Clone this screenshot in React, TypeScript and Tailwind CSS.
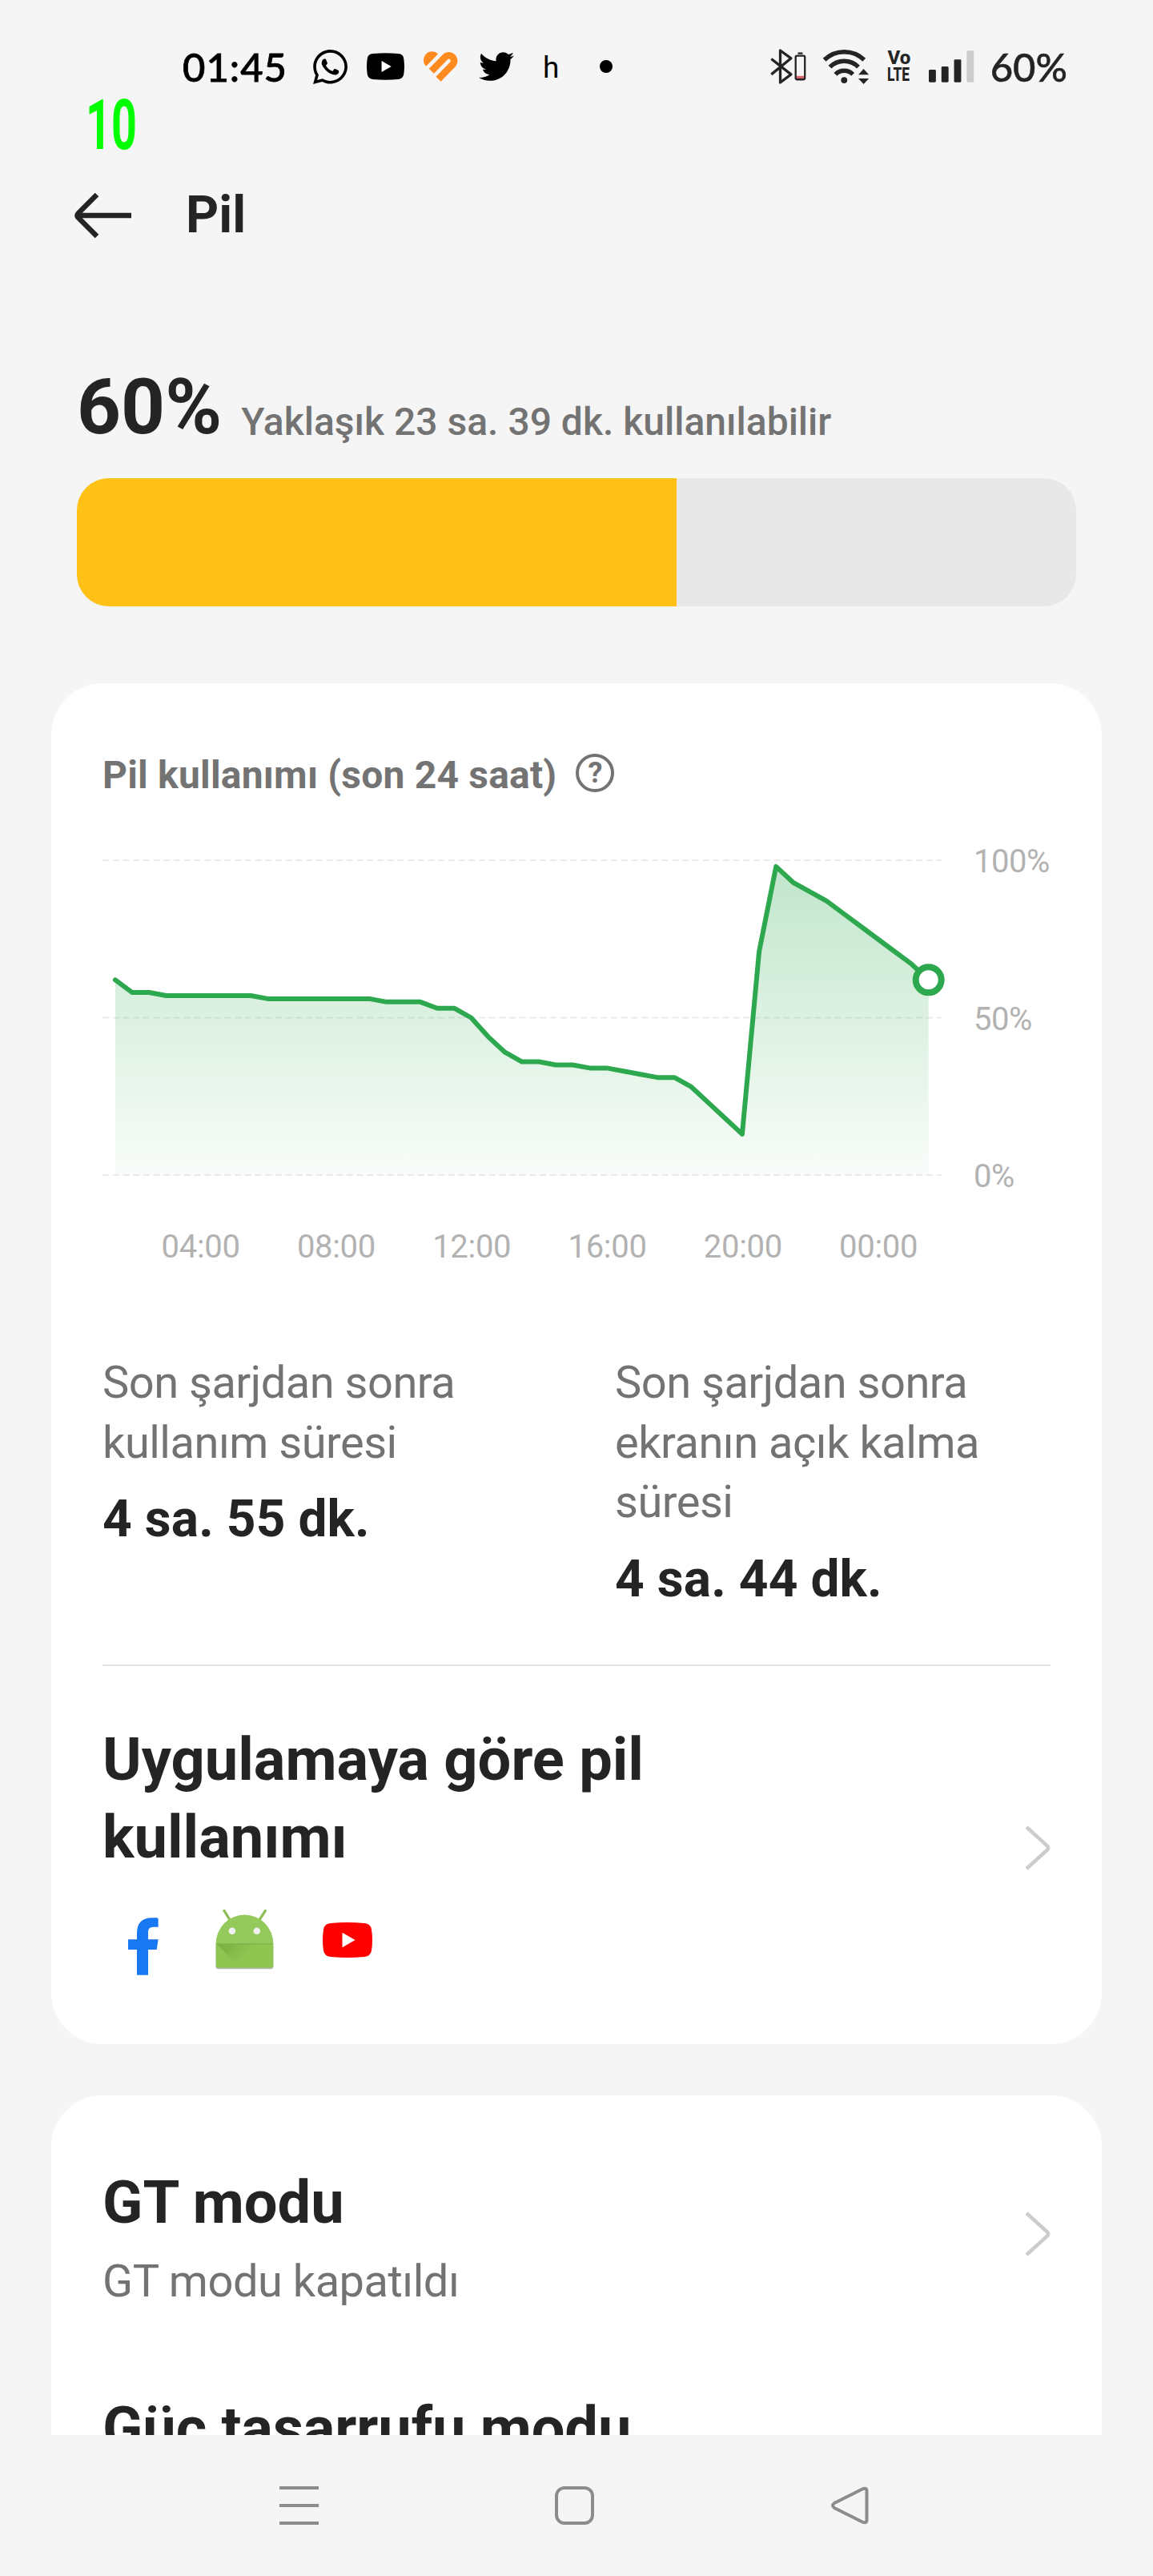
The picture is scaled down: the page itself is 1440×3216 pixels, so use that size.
import { FaWhatsapp, FaTwitter } from "react-icons/fa";

// one sample every 30 minutes, starting at 01:30
const LEVELS = [
  62, 58, 58, 57, 57, 57, 57, 57, 57, 56, 56, 56, 56, 56, 56, 56, 55, 55, 55, 53, 53, 50, 44, 39, 36, 36, 35, 35, 34,
  34, 33, 32, 31, 31, 28, 23, 18, 13, 71, 98, 93, 90, 87, 83, 79, 75, 71, 67, 62,
];

const HOURS = ["04:00", "08:00", "12:00", "16:00", "20:00", "00:00"];

const px = (i: number) => 16 + i * 21.16;
const py = (level: number) => 24 + (100 - level) * 3.93;

const YouTubeIcon = ({ className }: { className: string }) => (
  <svg className={className} viewBox="0 0 62 44" fill="currentColor">
    <path d="M10 1Q31-1 52 1Q60 1.500 61 9Q63 22 61 35Q60 42 52 43Q31 45 10 43Q2 42 1 35Q-1 22 1 9Q2 1.500 10 1Z" />
    <path d="M24.500 12.700V31.300L40.500 22Z" fill="#fff" />
  </svg>
);

const HeartIcon = () => (
  <svg className="ml-[23px] w-[45px] h-[38px]" viewBox="84 44 134 114" fill="none">
    <path d="M141 54A32 32 0 1 0 96 100Z" fill="#ff8a1f" />
    <path d="M116 118 169 64A20 20 0 0 1 197 92L142 148" stroke="#ff8a1f" strokeWidth="26" />
  </svg>
);

const BluetoothIcon = () => (
  <svg className="w-[46px] h-[46px]" viewBox="186 90 138 138" fill="none" stroke="#242424">
    <path d="M190 189 265 128 224 98V220L265 189 190 130" strokeWidth="10" strokeLinejoin="round" />
    <path d="M286 195H314V206H286Z" fill="#d9626c" stroke="none" />
    <rect x="282.500" y="118.500" width="35" height="90" rx="5" strokeWidth="7" />
    <path d="M291 109H309" strokeWidth="7" />
  </svg>
);

const WifiIcon = () => (
  <svg className="ml-[20px] w-[60px] h-[46px]" viewBox="382 88 180 138" fill="none" stroke="#242424" strokeWidth="17">
    <path d="M390 132A108 108 0 0 1 541 132" />
    <path d="M411 159A76 76 0 0 1 519 159" />
    <path d="M432 187A46 46 0 0 1 498 187" />
    <circle cx="465" cy="209" r="12" fill="#242424" stroke="none" />
    <path d="M519 188H559L539 166ZM519 203H559L539 224Z" fill="#242424" stroke="none" />
  </svg>
);

const SignalIcon = () => (
  <svg className="ml-[22px] w-[57px] h-[40px]" viewBox="0 0 57 40" fill="#242424">
    <rect x="0" y="24" width="9" height="16" rx="1.500" />
    <rect x="16" y="20" width="9" height="20" rx="1.500" />
    <rect x="32" y="11" width="9" height="29" rx="1.500" />
    <rect x="48" y="0" width="9" height="40" rx="1.500" fill="#ccc" />
  </svg>
);

const StatusBar = () => (
  <div className="h-[125px] pt-[42px] pl-[228px] pr-[107px] flex justify-between items-start text-black">
    <div className="h-[82px] flex items-center">
      <span className="w-[160px] font-[Lato,sans-serif] font-medium text-[49px] leading-none tracking-[1px] [-webkit-text-stroke:0.8px]">01:45</span>
      <FaWhatsapp className="w-[49px] h-[49px]" />
      <YouTubeIcon className="ml-[21px] w-[47px] h-[34px]" />
      <HeartIcon />
      <FaTwitter className="ml-[25px] w-[44px] h-[44px]" />
      <span className="mt-[2px] ml-[36px] text-[37px] leading-none">h</span>
      <span className="ml-[51px] w-4 h-4 rounded-full bg-black" />
    </div>
    <div className="w-[371px] h-[82px] flex items-center text-[#242424]">
      <BluetoothIcon />
      <WifiIcon />
      <div className="ml-[22px] w-[30px] shrink-0 flex flex-col font-extrabold text-[24px] leading-[21px]">
        <span>Vo</span>
        <span className="w-[44px] origin-left scale-x-[.72]">LTE</span>
      </div>
      <SignalIcon />
      <span className="ml-[20px] font-[Lato,sans-serif] font-medium text-[49px] leading-none [-webkit-text-stroke:0.5px]">60%</span>
    </div>
  </div>
);

const FacebookIcon = () => (
  <svg className="mt-[12px] w-[38px] h-[72px]" viewBox="90 74 114 216" fill="#1877f2">
    <path d="M123 289V194H90V156H123V133Q123 75 180 75H197Q203 75 203 81V109H184Q165 109 165 127V156H203L197 194H165V289Z" />
  </svg>
);

const AndroidIcon = () => (
  <svg className="ml-[70px] w-[75px] h-[78px]" viewBox="415 38 226 234" fill="none">
    <defs>
      <linearGradient id="fold" x1="424" y1="176" x2="500" y2="250" gradientUnits="userSpaceOnUse">
        <stop offset="0" stopColor="#4d7c1f" stopOpacity="0.35" />
        <stop offset="1" stopColor="#4d7c1f" stopOpacity="0" />
      </linearGradient>
    </defs>
    <path d="M420 180V258Q420 267 430 267H626Q636 267 636 258V180Z" fill="#b5b5b5" />
    <path d="M451 48 471 80M606 48 585 80" stroke="#8fbf5a" strokeWidth="10" strokeLinecap="round" />
    <path d="M420 172A108 109 0 0 1 636 172Z" fill="#94c95c" />
    <path d="M420 172H636V254Q636 263 626 263H430Q420 263 420 254Z" fill="#8fc651" />
    <path d="M424 174H560L560 263H508Z" fill="url(#fold)" />
    <path d="M420 172.500H636" stroke="#77a945" strokeWidth="3" />
    <circle cx="481" cy="124" r="13" fill="#f0f0f0" />
    <circle cx="574" cy="124" r="13" fill="#f0f0f0" />
  </svg>
);

const Chevron = () => (
  <svg className="shrink-0 w-8 h-14" viewBox="0 0 32 56" fill="none" stroke="#ccc" strokeWidth="4.5">
    <path d="M2 2 28 25.500Q30 28 28 30.500L2 54" />
  </svg>
);

const UsageChart = () => {
  const line = LEVELS.map((level, i) => `${px(i)},${py(level)}`).join(" ");
  return (
    <div className="flex">
      <div className="w-[1048px]">
        <svg className="block w-[1060px] h-[440px]" viewBox="0 0 1060 440" fill="none">
          <defs>
            <linearGradient id="area" x1="0" y1="24" x2="0" y2="417" gradientUnits="userSpaceOnUse">
              <stop offset="0" stopColor="#2ea84f" stopOpacity="0.3" />
              <stop offset="1" stopColor="#2ea84f" stopOpacity="0.03" />
            </linearGradient>
          </defs>
          {[100, 50, 0].map((level) => (
            <path key={level} d={`M0 ${py(level)}H1048`} stroke="#ebebeb" strokeWidth="2" strokeDasharray="8.200 4.500" />
          ))}
          <polygon points={`${px(0)},417 ${line} ${px(48)},417`} fill="url(#area)" />
          <polyline points={line} stroke="#2ea84f" strokeWidth="6" strokeLinecap="round" strokeLinejoin="round" />
          <circle cx={px(48)} cy={py(62)} r="16" fill="#fff" stroke="#2ea84f" strokeWidth="8" />
        </svg>
        <div className="mt-[43px] ml-[38px] flex text-[40px] leading-[47px] tracking-[-0.3px] text-[#b2b2b2]">
          {HOURS.map((hour) => (
            <span key={hour} className="shrink-0 w-[169.300px] text-center">{hour}</span>
          ))}
        </div>
      </div>
      <div className="h-[440px] pt-px pl-[40px] flex flex-col text-[40px] leading-[50px] tracking-[-0.5px] text-[#b2b2b2]">
        <span>100%</span>
        <span className="mt-[146.500px]">50%</span>
        <span className="mt-[146.500px]">0%</span>
      </div>
    </div>
  );
};

const Stat = ({ label, value }: { label: string; value: string }) => (
  <div className="shrink-0 w-[640px] pr-[150px]">
    <p className="text-[56px] leading-[74.500px] tracking-[-0.5px] text-[#737373]">{label}</p>
    <p className="mt-[21px] text-[64px] leading-[75px] tracking-[0.1px] font-bold">{value}</p>
  </div>
);

export default function App() {
  return (
    <div className="w-[1440px] h-[3216px] overflow-hidden flex flex-col bg-[#f5f5f5] font-[Roboto,sans-serif] text-[#242424]">
      <StatusBar />
      <p className="w-[100px] h-[62px] ml-[107px] origin-left scale-x-[.64] text-[87px] leading-[62px] font-bold text-[#00ff00]">10</p>

      <header className="mt-[44px] h-[75px] pl-[93px] flex items-center">
        <svg className="w-[72px] h-[56px]" viewBox="0 0 72 56" fill="none" stroke="#242424" strokeWidth="6.5">
          <path d="M28 2 5 25Q2 28 5 31L28 54M4 28H71" />
        </svg>
        <h1 className="mt-px ml-[67px] text-[64px] leading-none font-bold">Pil</h1>
      </header>

      <section className="mt-[135px] px-[96px]">
        <div className="flex items-baseline h-[156px]">
          <span className="text-[96px] leading-[134px] font-bold">60%</span>
          <span className="relative top-[2px] ml-[24px] text-[48px] font-medium text-[#737373]">Yaklaşık 23 sa. 39 dk. kullanılabilir</span>
        </div>
        <div className="h-[160px] rounded-[40px] bg-[#e8e8e8] overflow-hidden">
          <div className="w-3/5 h-full bg-[#ffc115]" />
        </div>
      </section>

      <section className="shrink-0 mx-[64px] mt-[96px] h-[1699px] px-[64px] rounded-[64px] bg-white">
        <div className="pt-[87px] h-[197px] flex items-start">
          <h2 className="text-[48px] leading-[56px] tracking-[0.200px] font-bold text-[#737373]">Pil kullanımı (son 24 saat)</h2>
          <span className="ml-[24px] mt-px w-[48px] h-[48px] rounded-full border-4 border-[#737373] flex items-center justify-center text-[36px] font-bold leading-none text-[#737373]">?</span>
        </div>
        <UsageChart />
        <div className="mt-[109px] h-[391px] flex border-b-2 border-[#e2e2e2]">
          <Stat label="Son şarjdan sonra kullanım süresi" value="4 sa. 55 dk." />
          <Stat label="Son şarjdan sonra ekranın açık kalma süresi" value="4 sa. 44 dk." />
        </div>
        <div className="pt-[68px] flex items-center justify-between">
          <div>
            <h2 className="w-[760px] text-[74px] leading-[97px] font-bold">Uygulamaya göre pil kullanımı</h2>
            <div className="mt-[40px] ml-[32px] flex items-start">
              <FacebookIcon />
              <AndroidIcon />
              <YouTubeIcon className="ml-[60px] mt-[18px] w-[62px] h-[44px] text-[#ff0000]" />
            </div>
          </div>
          <Chevron />
        </div>
      </section>

      <section className="shrink-0 mx-[64px] mt-[64px] h-[424px] px-[64px] overflow-hidden rounded-t-[64px] bg-white">
        <div className="mt-[85px] flex items-start justify-between">
          <div>
            <h2 className="text-[74px] leading-[97px] font-bold">GT modu</h2>
            <p className="mt-[13px] text-[56px] leading-[75px] tracking-[-0.5px] text-[#737373]">GT modu kapatıldı</p>
          </div>
          <div className="pt-[60px]">
            <Chevron />
          </div>
        </div>
        <h2 className="mt-[97px] text-[74px] leading-[97px] tracking-[-0.1px] font-bold">Güç tasarrufu modu</h2>
      </section>

      <nav className="h-[176px] pl-[349px] pr-[355px] flex items-center justify-between">
        <svg className="w-[49px] h-[48px]" viewBox="0 0 49 48" stroke="#8c8c8c" strokeWidth="4">
          <path d="M0 2H49M0 24H49M0 46H49" />
        </svg>
        <span className="w-[49px] h-[48px] rounded-[12px] border-4 border-[#8c8c8c]" />
        <svg className="w-[49px] h-[48px]" viewBox="0 0 49 48" fill="none" stroke="#8c8c8c" strokeWidth="4" strokeLinejoin="round">
          <path d="M41 3.500 6 21Q2 24 6 27L41 44.500Q46.500 47 46.500 42V6Q46.500 1 41 3.500Z" />
        </svg>
      </nav>
    </div>
  );
}
